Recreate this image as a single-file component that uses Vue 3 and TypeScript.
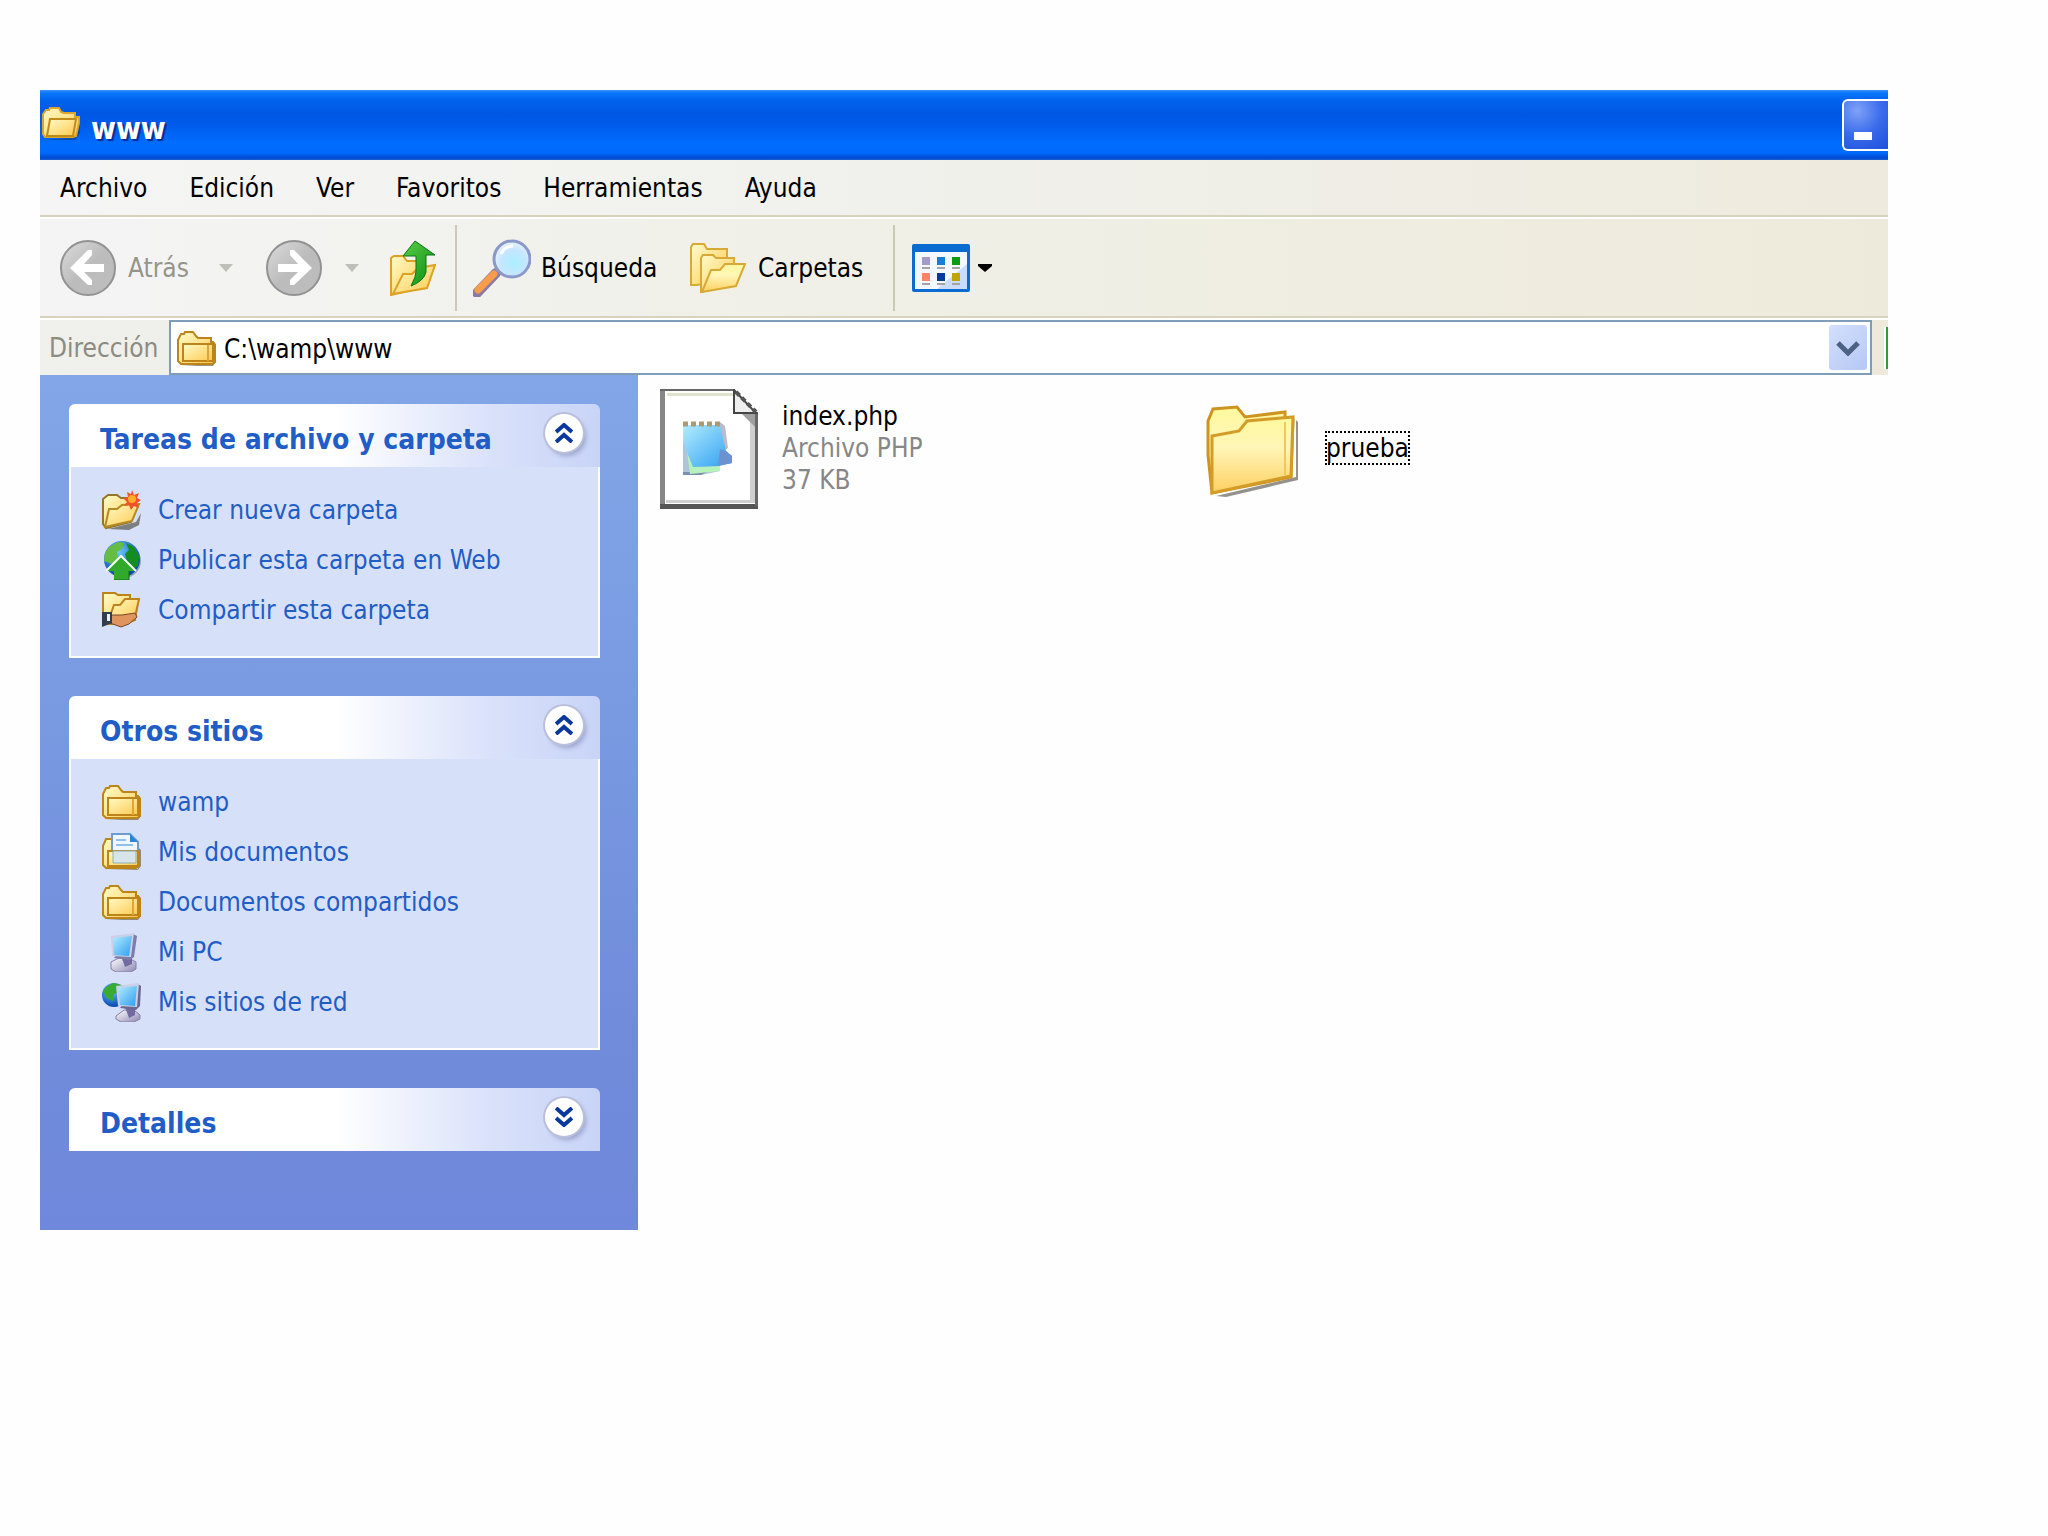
<script setup lang="ts">
import { ref } from 'vue'

interface Task {
  icon: string
  label: string
}

interface Panel {
  title: string
  open: boolean
  items: Task[]
}

const menus: string[] = ['Archivo', 'Edición', 'Ver', 'Favoritos', 'Herramientas', 'Ayuda']
const address = ref('C:\\wamp\\www')

const panels = ref<Panel[]>([
  {
    title: 'Tareas de archivo y carpeta',
    open: true,
    items: [
      { icon: 'new-folder', label: 'Crear nueva carpeta' },
      { icon: 'publish', label: 'Publicar esta carpeta en Web' },
      { icon: 'share', label: 'Compartir esta carpeta' },
    ],
  },
  {
    title: 'Otros sitios',
    open: true,
    items: [
      { icon: 'folder', label: 'wamp' },
      { icon: 'documents', label: 'Mis documentos' },
      { icon: 'folder', label: 'Documentos compartidos' },
      { icon: 'computer', label: 'Mi PC' },
      { icon: 'network', label: 'Mis sitios de red' },
    ],
  },
  { title: 'Detalles', open: false, items: [] },
])

const viewCells = [
  { x: 11, y: 14, fill: '#a29bcb' },
  { x: 26, y: 14, fill: '#1580dc' },
  { x: 41, y: 14, fill: '#0c9a10' },
  { x: 11, y: 30, fill: '#ff8368' },
  { x: 26, y: 30, fill: '#083a9c' },
  { x: 41, y: 30, fill: '#bfa506' },
]
</script>

<template>
  <svg class="sheet" aria-hidden="true">
    <defs>
      <linearGradient id="g-folder" x1="0" y1="0" x2="1" y2="1">
        <stop offset="0" stop-color="#fffbc8" />
        <stop offset="1" stop-color="#ffc94f" />
      </linearGradient>
      <linearGradient id="g-big" x1="0" y1="0" x2="0" y2="1">
        <stop offset="0" stop-color="#fff99c" />
        <stop offset="0.4" stop-color="#fff6b8" />
        <stop offset="1" stop-color="#ffcf62" />
      </linearGradient>
      <linearGradient id="g-screen" x1="0" y1="0" x2="1" y2="1">
        <stop offset="0" stop-color="#b4ecff" />
        <stop offset="1" stop-color="#2c9ef0" />
      </linearGradient>
      <linearGradient id="g-base" x1="0" y1="0" x2="1" y2="1">
        <stop offset="0" stop-color="#ffffff" />
        <stop offset="1" stop-color="#8d87b4" />
      </linearGradient>
      <linearGradient id="g-arrow" x1="0" y1="0" x2="1" y2="1">
        <stop offset="0" stop-color="#5cd04a" />
        <stop offset="1" stop-color="#078a0c" />
      </linearGradient>
      <linearGradient id="g-gray" x1="0" y1="0" x2="1" y2="1">
        <stop offset="0" stop-color="#dcdcdc" />
        <stop offset="0.5" stop-color="#bcbcbc" />
        <stop offset="1" stop-color="#bdbdbd" />
      </linearGradient>
      <radialGradient id="g-globe" cx="0.4" cy="0.3" r="0.7">
        <stop offset="0" stop-color="#6cc8ff" />
        <stop offset="1" stop-color="#0748ad" />
      </radialGradient>
      <radialGradient id="g-lens" cx="0.55" cy="0.6" r="0.6">
        <stop offset="0" stop-color="#a9f0ff" />
        <stop offset="0.6" stop-color="#c6e6ff" />
        <stop offset="1" stop-color="#e8f4ff" />
      </radialGradient>
      <symbol id="folder" viewBox="0 0 40 40">
        <path d="M5 38h32l3-4V16l-3-3v23z" fill="#6d6850" opacity="0.7" />
        <path d="M2 12l3-6h3l1-2h8l3 4 2 2h13v4h2l2 3v17l-3 2H5l-3-3z" fill="url(#g-folder)" stroke="#bd8519" stroke-width="2" />
        <path d="M7 33V16h30v17z" fill="url(#g-folder)" stroke="#bd8519" stroke-width="2" />
        <path d="M32 17v16" stroke="#e0a536" stroke-width="2" />
      </symbol>
      <symbol id="documents" viewBox="0 0 40 40">
        <path d="M5 38h32l3-4V18l-3-3v22z" fill="#6d6850" opacity="0.7" />
        <path d="M2 14l3-7h6v10h24l3 1v16l-3 2H5l-3-3z" fill="url(#g-folder)" stroke="#bd8519" stroke-width="2" />
        <path d="M11 2h18l8 8v20H11z" fill="#eff7ff" stroke="#6f9bd0" stroke-width="2" />
        <path d="M29 2v8h8z" fill="#2b85d6" />
        <path d="M15 8h10M15 13h17" stroke="#8fc0ee" stroke-width="2" />
        <path d="M7 19h30v15H7z" fill="url(#g-folder)" stroke="#bd8519" stroke-width="2" />
        <path d="M12 19h23v12H12z" fill="#d8e5e8" stroke="#8fadb8" stroke-width="1" />
      </symbol>
      <symbol id="new-folder" viewBox="0 0 40 40">
        <path d="M7 39l28-7 5-9-2 12-10 5z" fill="#55564c" opacity="0.7" />
        <path d="M2 9l5-4h9l4 3h13l3 10-6 14-25 6L2 34z" fill="url(#g-folder)" stroke="#94752a" stroke-width="2" />
        <path d="M4 37l4-18h8l5-4 17-1-7 17z" fill="url(#g-folder)" stroke="#b58a22" stroke-width="2" />
        <path d="M31 0l2 5 5-2-2 5 4 2-4 3 2 5-5-2-3 4-2-5-5 1 3-4-4-4 5-1-1-5 4 2z" fill="#f2512a" />
        <circle cx="31" cy="9" r="4" fill="#ffad2b" />
      </symbol>
      <symbol id="publish" viewBox="0 0 40 40">
        <circle cx="23" cy="21" r="17" fill="#515e80" opacity="0.5" />
        <circle cx="21" cy="19" r="18" fill="url(#g-globe)" />
        <path d="M8 7l9-5 6 1-2 6-5 3 1 7-6 5-8-3 1-8z" fill="#65bd45" />
        <path d="M25 3l8 4 5 9-1 10-6 3-5-8-2-7 4-4z" fill="#138c20" />
        <path d="M20 16L35 31H28v9H13v-9H5z" fill="#31aa2c" />
        <path d="M5 31L20 16L35 31" fill="none" stroke="#f2fff0" stroke-width="2" />
        <path d="M28 31v9H13" fill="none" stroke="#0c6d14" stroke-width="1" />
      </symbol>
      <symbol id="share" viewBox="0 0 40 40">
        <path d="M2 3h12l3 2h12v6h8l-3 19-10 4H2z" fill="url(#g-folder)" stroke="#bd8519" stroke-width="2" />
        <path d="M9 26l4-11h6l5-6h14l-4 18-8 3z" fill="url(#g-folder)" stroke="#bd8519" stroke-width="2" />
        <path d="M10 25h11l13-2 2 4-8 7-8 3-11-4z" fill="#e0955d" stroke="#754830" stroke-width="1" />
        <path d="M1 22h10v11l-10 4z" fill="#343b49" />
        <path d="M6 24h3v7H6z" fill="#e8eef5" />
      </symbol>
      <symbol id="computer" viewBox="0 0 40 40">
        <path d="M10 30l8-4h9l8 4v7l-5 3H15l-5-3z" fill="url(#g-base)" stroke="#8680a5" stroke-width="1" />
        <path d="M20 24l11-1v9l-7 3z" fill="#716ba0" />
        <path d="M32 2l4 2-3 21-4 3-16-2z" fill="#7f7ba6" />
        <path d="M10 4l23-3-3 24-19-1z" fill="#c9d0e8" />
        <path d="M12 6l19-2-3 20-15-1z" fill="url(#g-screen)" />
      </symbol>
      <symbol id="network" viewBox="0 0 40 40">
        <circle cx="13" cy="13" r="12" fill="url(#g-globe)" />
        <path d="M5 5l7-4 9 2-3 7-5 2-1 7-6-3-4-6z" fill="#39ab31" />
        <path d="M15 34l8-6h10l6 5v4l-6 3H20l-5-3z" fill="url(#g-base)" stroke="#8680a5" stroke-width="1" />
        <path d="M24 25h10v8l-6 3z" fill="#716ba0" />
        <path d="M37 2l3 2-1 20-4 4-16-2z" fill="#6a6791" />
        <path d="M15 4l23-3-2 24-19-1z" fill="#c9d0e8" />
        <path d="M17 6l19-2-2 20-15-1z" fill="url(#g-screen)" />
      </symbol>
    </defs>
  </svg>

  <div class="window">
    <header class="titlebar">
      <svg class="title-icon" viewBox="0 0 38 34" aria-hidden="true">
        <path d="M5 33h28l5-7V11l-4 1-2 18z" fill="#173c78" opacity="0.6" />
        <path d="M1 7l3-4h3l1-2h9l2 4 3 1h11v4h4v6l-3 13-3 1H3l-2-3z" fill="url(#g-folder)" stroke="#d9a52d" stroke-width="2" />
        <path d="M5 29l3-17h26l-3 17z" fill="url(#g-folder)" stroke="#c18b1a" stroke-width="2" />
      </svg>
      <h1>www</h1>
      <button class="minimize" type="button" aria-label="Minimizar"><span></span></button>
    </header>

    <nav class="menubar">
      <button v-for="m in menus" :key="m" type="button">{{ m }}</button>
    </nav>

    <div class="toolbar">
      <button class="tool nav-tool" type="button" disabled>
        <svg class="round" viewBox="0 0 56 56" aria-hidden="true">
          <circle cx="28" cy="28" r="27" fill="url(#g-gray)" stroke="#929292" stroke-width="2" />
          <path d="M10 28L28 10h4v5l-8 9h20v8H24l8 8v5h-4z" fill="#fff" />
        </svg>
        <span>Atrás</span>
      </button>
      <button class="drop" type="button" disabled aria-label="Historial atrás">
        <svg viewBox="0 0 14 8" aria-hidden="true"><path d="M0 0h14L7 8z" fill="#bfbfb8" /></svg>
      </button>
      <button class="tool forward" type="button" disabled aria-label="Adelante">
        <svg class="round" viewBox="0 0 56 56" aria-hidden="true">
          <circle cx="28" cy="28" r="27" fill="url(#g-gray)" stroke="#929292" stroke-width="2" />
          <path d="M46 28L28 10h-4v5l8 9H12v8h20l-8 8v5h4z" fill="#fff" />
        </svg>
      </button>
      <button class="drop" type="button" disabled aria-label="Historial adelante">
        <svg viewBox="0 0 14 8" aria-hidden="true"><path d="M0 0h14L7 8z" fill="#bfbfb8" /></svg>
      </button>
      <button class="tool up" type="button" aria-label="Arriba">
        <svg viewBox="0 0 46 56" aria-hidden="true">
          <path d="M1 55V18l3-2h9l4 5h18v26z" fill="url(#g-folder)" stroke="#dca125" stroke-width="2" />
          <path d="M3 54l10-20h9l6-6 17-3-8 23z" fill="url(#g-folder)" stroke="#dca125" stroke-width="2" />
          <path d="M25 1L45 15h-9v17q-2 9-15 14l4-9 1-6V16H13z" fill="url(#g-arrow)" stroke="#087514" stroke-width="1" />
        </svg>
      </button>
      <span class="rule"></span>
      <button class="tool search" type="button">
        <svg viewBox="0 0 58 58" aria-hidden="true">
          <path d="M4 54L23 34" stroke="#8b7ba4" stroke-width="10" stroke-linecap="round" />
          <path d="M5 51L21 35" stroke="#f79c4b" stroke-width="7" stroke-linecap="round" />
          <circle cx="39" cy="20" r="18" fill="url(#g-lens)" stroke="#8c98c8" stroke-width="3" />
          <path d="M28 15q4-8 12-8" fill="none" stroke="#fff" stroke-width="3" />
        </svg>
        <span>Búsqueda</span>
      </button>
      <button class="tool folders" type="button">
        <svg viewBox="0 0 56 50" aria-hidden="true">
          <path d="M1 42V4l2-3h11l3 5h20v30L7 42z" fill="url(#g-folder)" stroke="#d8aa35" stroke-width="2" />
          <path d="M11 49V15l2-3h10l3 3h18v26z" fill="url(#g-folder)" stroke="#d8aa35" stroke-width="2" />
          <path d="M12 49l9-22h9l5-6h20l-9 22z" fill="url(#g-big)" stroke="#d8aa35" stroke-width="2" />
        </svg>
        <span>Carpetas</span>
      </button>
      <span class="rule"></span>
      <button class="tool views" type="button" aria-label="Vistas">
        <svg class="views-icon" viewBox="0 0 58 48" aria-hidden="true">
          <rect width="58" height="48" rx="2" fill="#0a6bd0" />
          <rect x="3" y="8" width="52" height="37" fill="#f3f8ff" />
          <path d="M55 20v25H25z" fill="#cbdcfa" />
          <g v-for="c in viewCells" :key="c.fill">
            <rect :x="c.x - 1" :y="c.y - 1" width="8" height="8" :fill="c.fill" />
            <rect :x="c.x - 1" :y="c.y + 9" width="8" height="2" fill="#a3a3a8" />
          </g>
        </svg>
        <svg class="views-drop" viewBox="0 0 14 8" aria-hidden="true"><path d="M0 0h14v2L7 8 0 2z" fill="#000" /></svg>
      </button>
    </div>

    <div class="addressbar">
      <label for="address">Dirección</label>
      <div class="combo">
        <svg class="small-icon" aria-hidden="true"><use href="#folder" /></svg>
        <input id="address" v-model="address" type="text" spellcheck="false" />
        <button type="button" aria-label="Mostrar direcciones">
          <svg viewBox="0 0 24 16" aria-hidden="true"><path d="M2 3l10 10L22 3" fill="none" stroke="#4d6185" stroke-width="5" /></svg>
        </button>
      </div>
      <span class="go"></span>
    </div>

    <div class="body">
      <aside class="sidebar">
        <section v-for="p in panels" :key="p.title" class="panel">
          <header>
            <h2>{{ p.title }}</h2>
            <button type="button" :aria-label="p.title" :aria-expanded="p.open" @click="p.open = !p.open">
              <svg viewBox="0 0 18 20" aria-hidden="true">
                <path v-if="p.open" d="M1 9l8-7 8 7M1 19l8-7 8 7" />
                <path v-else d="M1 1l8 7 8-7M1 11l8 7 8-7" />
              </svg>
            </button>
          </header>
          <ul v-if="p.open && p.items.length">
            <li v-for="t in p.items" :key="t.label">
              <a href="#">
                <svg class="small-icon" aria-hidden="true"><use :href="'#' + t.icon" /></svg>
                <span>{{ t.label }}</span>
              </a>
            </li>
          </ul>
        </section>
      </aside>

      <main class="files">
        <div class="file">
          <svg class="page-icon" viewBox="0 0 98 120" aria-hidden="true">
            <path d="M2 2h73l21 21v94H2z" fill="#fff" />
            <path d="M7 4h67v3H7z" fill="#dfe3cb" />
            <path d="M90 26h5v88H6v-3h84z" fill="#cfcfcf" />
            <path d="M0 0h5v120H0z" fill="#858585" />
            <path d="M0 115h98v5H0z" fill="#565656" />
            <path d="M0 0h75v2H0zM95 23h3v94h-3z" fill="#686868" />
            <path d="M82 25h13v13z" fill="#a0a0a0" />
            <path d="M74 1v23h22z" fill="#eee" stroke="#444" stroke-width="2" />
            <path d="M76 3l20 20" stroke="#555" stroke-width="4" stroke-dasharray="5 3" />
            <path d="M23 86h18l19-4V50l-37-8z" fill="#aec5d8" />
            <path d="M23 86h18l6-3H23z" fill="#7e8fae" />
            <path d="M26 54l8 24 26-1v5l-30 3z" fill="#b6f2bc" />
            <path d="M60 33l5 4 3 22-8 6z" fill="#b9bccb" />
            <path d="M23 36h37l6 26 6 5v7l-14 3-25 1-10-24z" fill="url(#g-screen)" />
            <path d="M60 60l6 2 6 5v7l-14 3z" fill="#6b91d3" />
            <path d="M23 35h38" stroke="#aa9a75" stroke-width="5" stroke-dasharray="5 3" />
          </svg>
          <p>
            <span class="name">index.php</span>
            <span>Archivo PHP</span>
            <span>37 KB</span>
          </p>
        </div>
        <div class="file folder-item">
          <svg class="big-folder" viewBox="0 0 92 92" aria-hidden="true">
            <path d="M10 91l80-19V15l2 2v58L20 92z" fill="#68645e" opacity="0.7" />
            <path d="M6 88L2 50V16L7 4l24-2 8 10 40-5v7l8 1-2 57z" fill="url(#g-big)" stroke="#ce9420" stroke-width="3" />
            <path d="M6 88V31l27-5 8-10 46-4-2 59z" fill="url(#g-big)" stroke="#d39c28" stroke-width="3" />
            <path d="M79 17v53" stroke="#f5c65b" stroke-width="2" />
          </svg>
          <p><span class="name focused">prueba</span></p>
        </div>
      </main>
    </div>
  </div>
</template>

<style>
body {
  background: #fefefe;
}
</style>

<style scoped>
.sheet {
  position: absolute;
  width: 0;
  height: 0;
}

.window {
  margin: 90px 160px 0 40px;
  font: 26px/32px 'DejaVu Sans Condensed', Roboto, sans-serif;
  color: #000;
}

button,
input {
  margin: 0;
  padding: 0;
  border: 0;
  background: none;
  font: inherit;
  color: inherit;
}

button {
  display: flex;
  align-items: center;
}

svg {
  display: block;
  flex: none;
}

.small-icon {
  width: 40px;
  height: 40px;
}

.titlebar {
  display: flex;
  align-items: center;
  height: 70px;
  padding-left: 2px;
  box-sizing: border-box;
  background: linear-gradient(#3b92fb 0, #0a78fb 4%, #0163ee 14%, #0057e3 34%, #005cec 52%, #006dff 76%, #006afc 90%, #0047d0 97%, #1c61d4);
}

.title-icon {
  width: 38px;
  height: 34px;
  margin-bottom: 2px;
}

h1 {
  flex: 1;
  margin: 8px 0 0 11px;
  font-size: 30px;
  line-height: 32px;
  color: #fff;
  text-shadow: 2px 2px 1px #0a2a96;
}

.minimize {
  align-items: flex-end;
  width: 46px;
  height: 52px;
  box-sizing: border-box;
  padding: 0 0 9px 10px;
  border: 2px solid #fff;
  border-right: 0;
  border-radius: 6px 0 0 6px;
  background: radial-gradient(circle at 30% 20%, #7fa2f8, #3a6bea 50%, #1c4fdc);
}

.minimize span {
  width: 18px;
  height: 8px;
  background: #fff;
}

.menubar {
  display: flex;
  gap: 42px;
  height: 55px;
  padding-left: 20px;
  background: linear-gradient(90deg, #f5f5f5, #f0f0eb 50%, #eeeadd);
  border-bottom: 2px solid #d5d3bd;
}

.toolbar {
  display: flex;
  align-items: center;
  height: 97px;
  padding-left: 20px;
  border-top: 2px solid #fff;
  border-bottom: 2px solid #d8d3bd;
  background: linear-gradient(90deg, #f4f4f5, #f0f0e8 40%, #eeeadb);
}

.tool {
  flex: none;
}

.nav-tool {
  gap: 12px;
  width: 146px;
  color: #95958c;
}

.round {
  width: 56px;
  height: 56px;
}

.drop {
  width: 40px;
  justify-content: center;
}

.drop svg,
.views-drop {
  width: 14px;
  height: 8px;
}

.forward {
  margin-left: 20px;
  margin-right: 10px;
}

.up {
  margin-left: 18px;
  margin-right: 19px;
}

.up svg {
  width: 46px;
  height: 56px;
}

.rule {
  width: 2px;
  height: 86px;
  background: #cbc9b5;
}

.search {
  gap: 10px;
  width: 217px;
  margin-left: 16px;
}

.search svg {
  width: 58px;
  height: 58px;
}

.folders {
  gap: 12px;
  width: 186px;
  margin-right: 17px;
}

.folders svg {
  width: 56px;
  height: 50px;
}

.views {
  gap: 8px;
  margin-left: 17px;
}

.views-icon {
  width: 58px;
  height: 48px;
}

.addressbar {
  display: flex;
  align-items: center;
  height: 55px;
  padding-left: 9px;
  border-top: 2px solid #fff;
  background: linear-gradient(90deg, #f0f0ec, #eeeadb);
}

.addressbar label {
  width: 120px;
  color: #8b8b82;
}

.combo {
  display: flex;
  flex: 1;
  align-items: center;
  gap: 8px;
  height: 55px;
  box-sizing: border-box;
  padding: 0 3px 0 5px;
  border: 2px solid #7f9db9;
  background: #fff;
}

.combo input {
  flex: 1;
  min-width: 0;
  height: 40px;
  padding-top: 2px;
  outline: 0;
}

.combo button {
  justify-content: center;
  width: 38px;
  height: 45px;
  border-radius: 3px;
  background: linear-gradient(135deg, #d3e0fd, #b5c7f3);
}

.combo button svg {
  width: 24px;
  height: 16px;
}

.go {
  width: 2px;
  height: 42px;
  margin-left: 12px;
  border-left: 2px solid #fff;
  background: #2f9b3a;
}

.body {
  display: flex;
  align-items: flex-start;
}

.sidebar {
  display: flex;
  flex-direction: column;
  flex: none;
  gap: 38px;
  width: 598px;
  box-sizing: border-box;
  padding: 29px 38px 79px 29px;
  background: linear-gradient(#82a6e7, #7a9be2 35%, #718cdb 75%, #6f88db);
}

.panel header {
  display: flex;
  align-items: center;
  justify-content: space-between;
  height: 63px;
  box-sizing: border-box;
  padding: 0 17px 0 31px;
  border-radius: 6px 6px 0 0;
  background: linear-gradient(90deg, #fff 50%, #d9e1fa 80%, #c8d4f7);
}

h2 {
  margin: 8px 0 0;
  font-size: 28px;
  line-height: 32px;
  color: #215dc6;
}

.panel header button {
  justify-content: center;
  width: 38px;
  height: 38px;
  margin-bottom: 6px;
  border-radius: 50%;
  background: #fff;
  box-shadow: 0 0 0 2px #b9bfdb, 3px 4px 5px #9aa4cc;
}

.panel header button svg {
  width: 18px;
  height: 20px;
  fill: none;
  stroke: #0a389c;
  stroke-width: 4;
}

ul {
  margin: 0;
  padding: 18px 0 21px 30px;
  list-style: none;
  border: 2px solid #fff;
  border-top: 0;
  background: #d7e0f9;
}

li a {
  display: flex;
  align-items: center;
  gap: 17px;
  height: 50px;
  color: #215dc6;
  text-decoration: none;
}

.files {
  display: grid;
  grid-template-columns: 546px 1fr;
  flex: 1;
  padding: 14px 0 0 22px;
}

.file {
  display: flex;
  align-items: center;
  gap: 24px;
  height: 120px;
}

.folder-item {
  gap: 28px;
}

.page-icon {
  width: 98px;
  height: 120px;
}

.big-folder {
  width: 92px;
  height: 92px;
  margin-top: 4px;
}

.file p {
  display: flex;
  flex-direction: column;
  margin: 0 0 2px;
  color: #878787;
}

.file .name {
  color: #000;
}

.file .focused {
  outline: 2px dotted #000;
  outline-offset: -1px;
}
</style>
